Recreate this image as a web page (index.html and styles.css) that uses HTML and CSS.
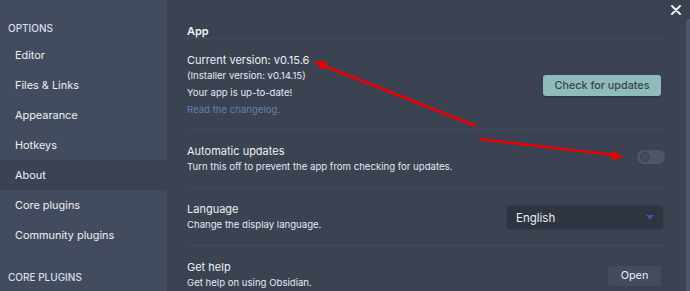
FILE: index.html
```html
<!DOCTYPE html>
<html lang="en">

<head>
    <meta charset="UTF-8">
    <title>Settings - About</title>
    <link rel="stylesheet" href="styles.css">
</head>

<body>
    <div class="modal">
        <nav class="sidebar">
            <div class="nav-header">Options</div>
            <div class="nav-item">Editor</div>
            <div class="nav-item">Files &amp; Links</div>
            <div class="nav-item">Appearance</div>
            <div class="nav-item">Hotkeys</div>
            <div class="nav-item is-active">About</div>
            <div class="nav-item">Core plugins</div>
            <div class="nav-item">Community plugins</div>
            <div class="nav-header second">Core plugins</div>
        </nav>

        <main class="content">
            <h3 class="section-title">App</h3>

            <div class="setting first">
                <div class="setting-info">
                    <div class="setting-name">Current version: v0.15.6</div>
                    <div class="setting-desc">
                        <div>(Installer version: v0.14.15)</div>
                        <div>Your app is up-to-date!</div>
                        <div><a class="link" href="#">Read the changelog.</a></div>
                    </div>
                </div>
                <button type="button" class="btn-accent">Check for updates</button>
            </div>

            <div class="setting">
                <div class="setting-info">
                    <div class="setting-name">Automatic updates</div>
                    <div class="setting-desc">Turn this off to prevent the app from checking for updates.</div>
                </div>
                <div class="toggle"><span class="knob"></span></div>
            </div>

            <div class="setting">
                <div class="setting-info">
                    <div class="setting-name">Language</div>
                    <div class="setting-desc">Change the display language.</div>
                </div>
                <div class="dropdown">
                    <span>English</span>
                    <span class="caret"></span>
                </div>
            </div>

            <div class="setting">
                <div class="setting-info">
                    <div class="setting-name">Get help</div>
                    <div class="setting-desc">Get help on using Obsidian.</div>
                </div>
                <button type="button" class="btn">Open</button>
            </div>
        </main>

        <div class="close">
            <svg width="10" height="10" viewBox="0 0 10 10">
                <path d="M1 1 L9 9 M9 1 L1 9" stroke="#eceff4" stroke-width="2" stroke-linecap="round" />
            </svg>
        </div>
        <div class="scrollbar"></div>

        <!-- annotation arrows drawn over the screenshot -->
        <svg class="arrows" width="690" height="291" viewBox="0 0 690 291">
            <line x1="476" y1="126" x2="322" y2="65" stroke="#f00000" stroke-width="2.5" />
            <polygon points="314,62 327,61 323,70" fill="#f00000" />
            <line x1="479" y1="139" x2="614" y2="155" stroke="#f00000" stroke-width="2.5" />
            <polygon points="624,157 612,151 611,160" fill="#f00000" />
        </svg>
    </div>
</body>

</html>
```

FILE: styles.css
```css
body {
    margin: 0;
    font-family: Inter, "Noto Sans", sans-serif;
    background: #3b4252;
    color: #e5e9f0;
}

.modal {
    position: relative;
    display: flex;
    width: 690px;
    height: 291px;
    overflow: hidden;
}

.sidebar {
    width: 167px;
    flex-shrink: 0;
    background: #434c5e;
}

.nav-header {
    padding: 20px 0 5px 8px;
    font-size: 10px;
    line-height: 14px;
    font-weight: 500;
    text-transform: uppercase;
    color: #d8dee9;
}

.nav-header:first-child {
    padding-top: 21px;
}

.nav-header.second {
    padding-top: 20px;
}

.nav-item {
    height: 30px;
    line-height: 30px;
    padding-left: 15px;
    font-size: 10.9px;
    color: #eceff4;
}

.nav-item.is-active {
    background: #3b4252;
}

.content {
    flex: 1;
    padding: 24px 25px 0 20px;
}

.section-title {
    margin: 0;
    font-size: 11px;
    line-height: 14px;
    font-weight: 600;
    color: #eceff4;
    border-bottom: 1px solid #434c5e;
}

.setting {
    display: flex;
    align-items: center;
    justify-content: space-between;
    padding: 14px 0 12px;
    border-bottom: 1px solid #434c5e;
}

.setting.first {
    padding-bottom: 11px;
}

.setting-name {
    font-size: 11px;
    line-height: 14px;
    color: #eceff4;
}

.setting-desc {
    font-size: 9.6px;
    line-height: 17px;
    color: #e5e9f0;
}

.link {
    color: #5e81ac;
    text-decoration: none;
}

button {
    font-family: inherit;
    cursor: pointer;
    border: none;
    border-radius: 3px;
}

.btn-accent {
    height: 21px;
    width: 118px;
    margin-right: 4px;
    padding: 0;
    font-size: 10.8px;
    font-weight: 500;
    background: #8fbcbb;
    color: #3b4252;
    box-shadow: 0 1px 2px rgba(0, 0, 0, 0.25);
}

.btn {
    height: 20px;
    width: 53px;
    margin-right: 4px;
    padding: 0;
    font-size: 10.8px;
    background: #434c5e;
    color: #eceff4;
}

.toggle {
    width: 28px;
    height: 14px;
    margin-bottom: 6px;
    border-radius: 7px;
    background: #4c566a;
    display: flex;
    align-items: center;
    padding-left: 3px;
    box-sizing: border-box;
}

.knob {
    width: 10px;
    height: 10px;
    border-radius: 50%;
    background: #434c5e;
    border: 1px solid #3b4252;
    box-sizing: border-box;
}

.dropdown {
    width: 158px;
    height: 25px;
    margin-right: 1px;
    box-sizing: border-box;
    padding: 0 9px 0 9px;
    display: flex;
    align-items: center;
    justify-content: space-between;
    background: #2e3440;
    border: 1px solid #363d4a;
    border-radius: 4px;
    font-size: 11.5px;
    color: #eceff4;
}

.caret {
    width: 0;
    height: 0;
    border-left: 4px solid transparent;
    border-right: 4px solid transparent;
    border-top: 5px solid #5844b0;
}

.close {
    position: absolute;
    top: 5px;
    right: 9px;
    width: 10px;
    height: 10px;
    display: flex;
}

.scrollbar {
    position: absolute;
    top: 19px;
    right: 0;
    width: 4px;
    height: 280px;
    border-radius: 3px 0 0 0;
    background: #4c566a;
}

.arrows {
    position: absolute;
    top: 0;
    left: 0;
    pointer-events: none;
}
```
